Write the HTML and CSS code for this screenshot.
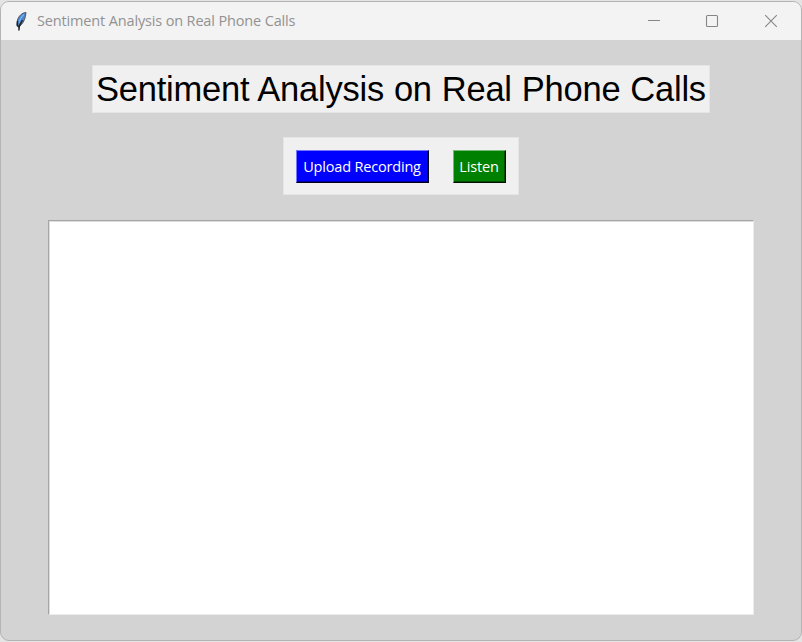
FILE: index.html
```
<!DOCTYPE html>
<html lang="en">
<head>
<meta charset="utf-8">
<title>Sentiment Analysis on Real Phone Calls</title>
<link rel="stylesheet" href="styles.css">
</head>
<body>
<div class="window">
  <header class="titlebar">
    <svg class="feather" width="12" height="21" viewBox="0 0 12 21">
      <path d="M11 1.500C7.500 1.500 3.500 5 2.500 9L2 13.500L3.500 16.500L6 14C9 11 10.500 7 11 1.500Z" fill="#4786d2" stroke="#55575b" stroke-width="1"/>
      <path d="M9 3.500C6.500 5.500 5 8.500 4 12" fill="none" stroke="#7fb2ec" stroke-width="1.200"/>
      <path d="M7.500 9L4.500 14.500L3.800 19.500M2.500 10L2.300 14.500L4.500 16" fill="none" stroke="#202226" stroke-width="1.500"/>
    </svg>
    <span class="caption">Sentiment Analysis on Real Phone Calls</span>
    <nav class="controls">
      <svg width="14" height="14" viewBox="0 0 14 14"><path d="M1 6.500H13"/></svg>
      <svg width="14" height="14" viewBox="0 0 14 14"><rect x="1.500" y="1.500" width="11" height="11" rx="1"/></svg>
      <svg width="14" height="14" viewBox="0 0 14 14"><path d="M1.200 1.200L12.800 12.800M12.800 1.200L1.200 12.800"/></svg>
    </nav>
  </header>
  <main class="content">
    <h1 class="heading">Sentiment Analysis on Real Phone Calls</h1>
    <div class="actions">
      <button class="button upload">Upload Recording</button>
      <button class="button listen">Listen</button>
    </div>
    <div class="output"></div>
  </main>
</div>
</body>
</html>
```
FILE: styles.css
```
* { box-sizing: border-box; }
body {
  margin: 0;
  height: 642px;
  padding-top: 1px;
  background: #e4e4e4;
  overflow: hidden;
}
.window {
  width: 802px;
  height: 640px;
  border: 1px solid #b4b4b4;
  border-radius: 9px;
  background: #d3d3d3;
  overflow: hidden;
}
.titlebar {
  display: flex;
  align-items: center;
  height: 38px;
  padding: 0 23px 0 14px;
  background: #f3f3f3;
}
.feather { flex: none; }
.caption {
  margin-left: 10px;
  font: 14.500px/20px "Open Sans", sans-serif;
  letter-spacing: -0.150px;
  color: #929292;
  white-space: nowrap;
}
.controls {
  display: flex;
  margin-left: auto;
}
.controls svg {
  fill: none;
  stroke: #868686;
  stroke-width: 1.100;
}
.controls svg + svg { margin-left: 44px; }
.controls svg:last-child { margin-left: 45px; }
.content {
  display: flex;
  flex-direction: column;
  align-items: center;
  padding-top: 25px;
}
.heading {
  width: 618px;
  height: 48px;
  margin: 0;
  padding-left: 3px;
  border: 1px solid #e5e5e5;
  background: #f0f0f0;
  font: 400 34.500px/46px "Liberation Sans", sans-serif;
  letter-spacing: -0.230px;
  word-spacing: 0.600px;
  color: #000;
  white-space: nowrap;
}
.actions {
  display: flex;
  gap: 24px;
  width: 236px;
  height: 58px;
  margin-top: 24px;
  padding: 12px;
  border: 1px solid #e5e5e5;
  background: #f0f0f0;
}
.button {
  height: 33px;
  padding: 0 1px 0 0;
  border: 1px solid;
  font: 14.500px/29px "Open Sans", sans-serif;
  letter-spacing: -0.180px;
  color: #fff;
  white-space: nowrap;
}
.upload {
  width: 133px;
  border-color: #7676ff #000018 #000018 #7676ff;
  background: #0000ff;
  box-shadow: inset -1px -1px #000099;
}
.listen {
  width: 53px;
  border-color: #76bb76 #001000 #001000 #76bb76;
  background: #008000;
  box-shadow: inset -1px -1px #004c00;
}
.output {
  width: 706px;
  height: 395px;
  margin-top: 25px;
  border: 1px solid;
  border-color: #a5a5a5 #ececec #ececec #a5a5a5;
  background: #fff;
  box-shadow: inset 1px 1px #dedede;
}
```
